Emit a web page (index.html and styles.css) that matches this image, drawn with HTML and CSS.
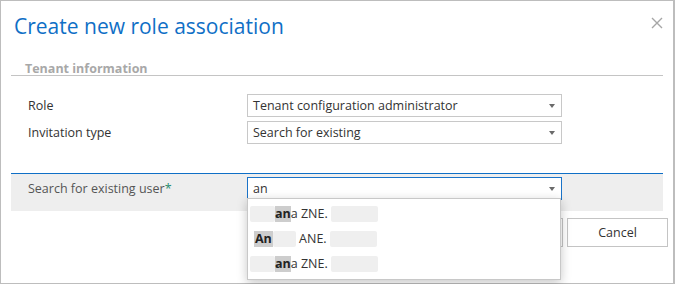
FILE: index.html
```
<!DOCTYPE html>
<html>
	<head>
		<meta charset="UTF-8">
		<title>Create new role association</title>
		<link rel="stylesheet" href="styles.css">
	</head>
	<body>
		<div class="dialog">
			<div class="dialog-head">
				<h1 class="dialog-title">Create new role association</h1>
				<svg class="dialog-close" width="12" height="12" viewBox="0 0 12 12"><path d="M1 1L11 11M11 1L1 11" stroke="#a6a6a6" stroke-width="1.4" fill="none"/></svg>
			</div>
			<div class="section">
				<div class="section-title">Tenant information</div>
				<div class="form-row">
					<label class="form-label">Role</label>
					<div class="select">Tenant configuration administrator<span class="caret"></span></div>
				</div>
				<div class="form-row">
					<label class="form-label">Invitation type</label>
					<div class="select">Search for existing<span class="caret"></span></div>
				</div>
			</div>
			<div class="search-row">
				<label class="form-label">Search for existing user<span class="req">*</span></label>
				<div class="search-wrap">
					<div class="select select-active">an<span class="caret"></span></div>
					<ul class="suggest">
						<li><span class="blur b1"></span><span class="hit">an</span>a ZNE. <span class="blur b2"></span></li>
						<li><span class="hit hit-first">An</span><span class="blur b3"></span> ANE. <span class="blur b2"></span></li>
						<li><span class="blur b1"></span><span class="hit">an</span>a ZNE. <span class="blur b2"></span></li>
					</ul>
				</div>
			</div>
			<div class="buttons">
				<button class="btn">OK</button>
				<button class="btn">Cancel</button>
			</div>
		</div>
	</body>
</html>
```
FILE: styles.css
```
body{
	margin: 0;
	font-family: "Open Sans", "Noto Sans", sans-serif;
	color: #333;
	background: #fff;
}
.dialog{
	width: 672px;
	height: 282px;
	border: 1px solid #bdbdbd;
	border-right-width: 2px;
	position: relative;
	background: #fff;
}
.dialog-head{
	display: flex;
	justify-content: space-between;
	align-items: flex-start;
	padding: 12px 10px 0 13px;
	height: 40px;
}
.dialog-title{
	margin: 0;
	font-weight: normal;
	font-size: 21px;
	line-height: 26px;
	color: #0f6fc6;
}
.dialog-close{
	margin-top: 4px;
	margin-right: 0;
}
.section{
	margin: 0 10px;
}
.section-title{
	font-size: 12.5px;
	font-weight: bold;
	color: #a8a8a8;
	padding: 7px 0 0 14px;
	height: 23px;
	border-bottom: 1px solid #c4c4c4;
	box-sizing: border-box;
}
.form-row{
	display: flex;
	align-items: center;
	margin-top: 4px;
}
.section .form-row:nth-child(2){
	margin-top: 18px;
}
.form-label{
	width: 219px;
	padding-left: 17px;
	font-size: 12.5px;
	color: #333;
}
.select{
	position: relative;
	width: 315px;
	height: 23px;
	box-sizing: border-box;
	border: 1px solid #c8c8c8;
	font-size: 12.5px;
	line-height: 21px;
	padding-left: 5px;
	background: #fff;
}
.caret{
	position: absolute;
	right: 6px;
	top: 9px;
	width: 0;
	height: 0;
	border-left: 3.5px solid transparent;
	border-right: 3.5px solid transparent;
	border-top: 4px solid #6a6a6a;
}
.search-row{
	display: flex;
	margin: 29px 10px 0;
	height: 38px;
	border-top: 1px solid #0f6fc6;
	background: #eeeeee;
	padding-top: 3px;
	box-sizing: border-box;
}
.search-row .form-label{
	padding-top: 3px;
	color: #555;
}
.req{
	color: #2a8c6e;
}
.search-wrap{
	position: relative;
}
.select-active{
	border-color: #1a73c8;
}
.suggest{
	position: absolute;
	left: 0;
	top: 21px;
	z-index: 2;
	width: 314px;
	margin: 0;
	padding: 2px 0 3px;
	list-style: none;
	background: #fff;
	border: 1px solid #c8c8c8;
	box-sizing: border-box;
	box-shadow: 0 3px 10px rgba(0,0,0,0.22);
	font-size: 12.5px;
}
.suggest li{
	display: flex;
	align-items: center;
	height: 25px;
	padding-left: 2px;
	white-space: pre;
}
.blur{
	display: inline-block;
	height: 16px;
	background: #efefef;
	border-radius: 2px;
}
.b1{ width: 25px; }
.b2{ width: 47px; }
.b3{ width: 23px; }
.hit{
	font-weight: bold;
	color: #222;
	background: #cdcdcd;
	line-height: 16px;
	height: 16px;
}
.hit-first{
	margin-left: 4px;
	padding: 0 1px;
}
.buttons{
	display: flex;
	justify-content: flex-end;
	gap: 4px;
	margin: 7px 5px 0 0;
}
.btn{
	width: 101px;
	height: 29px;
	border: 1px solid #c4c4c4;
	background: #fff;
	font-family: "Open Sans", "Noto Sans", sans-serif;
	font-size: 12.5px;
	color: #333;
}
```
